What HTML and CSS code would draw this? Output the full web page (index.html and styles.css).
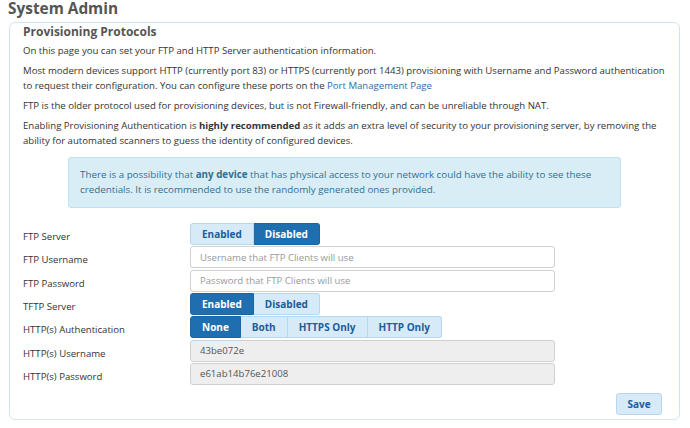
FILE: index.html
```html
<!DOCTYPE html>
<html>
<head>
<meta charset="utf-8">
<link rel="stylesheet" href="styles.css">
</head>
<body>
<div class="page">
  <h1 class="page-title">System Admin</h1>
  <div class="panel">
    <h2 class="panel-title">Provisioning Protocols</h2>
    <p>On this page you can set your FTP and HTTP Server authentication information.</p>
    <p>Most modern devices support HTTP (currently port 83) or HTTPS (currently port 1443) provisioning with Username and Password authentication to request their configuration. You can configure these ports on the <a class="link" href="#">Port Management Page</a></p>
    <p>FTP is the older protocol used for provisioning devices, but is not Firewall-friendly, and can be unreliable through NAT.</p>
    <p>Enabling Provisioning Authentication is <b>highly recommended</b> as it adds an extra level of security to your provisioning server, by removing the ability for automated scanners to guess the identity of configured devices.</p>
    <div class="alert">There is a possibility that <b>any device</b> that has physical access to your network could have the ability to see these credentials. It is recommended to use the randomly generated ones provided.</div>
    <div class="form">
      <div class="label">FTP Server</div>
      <div class="control"><div class="btn-group"><span class="btn">Enabled</span><span class="btn active">Disabled</span></div></div>
      <div class="label">FTP Username</div>
      <div class="control"><input class="input" type="text" placeholder="Username that FTP Clients will use"></div>
      <div class="label">FTP Password</div>
      <div class="control"><input class="input" type="text" placeholder="Password that FTP Clients will use"></div>
      <div class="label">TFTP Server</div>
      <div class="control"><div class="btn-group"><span class="btn active">Enabled</span><span class="btn">Disabled</span></div></div>
      <div class="label">HTTP(s) Authentication</div>
      <div class="control"><div class="btn-group"><span class="btn active">None</span><span class="btn">Both</span><span class="btn">HTTPS Only</span><span class="btn">HTTP Only</span></div></div>
      <div class="label">HTTP(s) Username</div>
      <div class="control"><input class="input" type="text" value="43be072e" disabled></div>
      <div class="label">HTTP(s) Password</div>
      <div class="control"><input class="input" type="text" value="e61ab14b76e21008" disabled></div>
    </div>
    <div class="actions"><span class="btn save">Save</span></div>
  </div>
</div>
</body>
</html>
```
FILE: styles.css
```css
html, body {
  margin: 0;
  padding: 0;
  background: #fff;
}
body {
  font-family: "Open Sans", "Liberation Sans", sans-serif;
  font-size: 9.6px;
  color: #333;
}
.page {
  padding: 0 10px 0 9px;
}
.page-title {
  margin: 0 0 4px -1px;
  font-size: 15.4px;
  line-height: 18px;
  font-weight: 700;
  color: #555;
}
.panel {
  border: 1px solid #cfe4f4;
  border-radius: 6px;
  padding: 1px 13px 4px;
  height: 398px;
  box-sizing: border-box;
}
.panel-title {
  margin: 0 0 3px;
  font-size: 12px;
  line-height: 16px;
  font-weight: 700;
  color: #555;
}
p {
  margin: 0 0 5px;
  line-height: 15px;
}
.link {
  color: #2a6db0;
  text-decoration: none;
}
.alert {
  margin: 9px 45px 0;
  padding: 9px 11px 10px;
  font-size: 9.8px;
  line-height: 15px;
  background: #d9edf7;
  border: 1px solid #bfe1f2;
  border-radius: 3px;
  color: #31708f;
}
.form {
  margin-top: 15px;
  display: grid;
  grid-template-columns: 167px 365px;
  row-gap: 1.33px;
}
.label {
  padding-top: 6px;
  line-height: 16px;
  height: 22px;
  box-sizing: border-box;
}
.control {
  height: 22px;
}
.btn-group {
  display: inline-flex;
  height: 22px;
}
.btn {
  display: inline-flex;
  align-items: center;
  padding: 0 11px;
  height: 22px;
  box-sizing: border-box;
  font-weight: 700;
  font-size: 10px;
  color: #1c5c9c;
  background: #d6eaf8;
  border: 1px solid #b7d7ef;
  border-left-width: 0;
}
.btn-group .btn:first-child {
  border-left-width: 1px;
  border-radius: 3px 0 0 3px;
}
.btn-group .btn:last-child {
  border-radius: 0 3px 3px 0;
}
.btn.active {
  background: #1f6fb0;
  border-color: #1b65a2;
  color: #fff;
}
.input {
  display: block;
  width: 365px;
  height: 22px;
  box-sizing: border-box;
  margin: 0;
  padding: 0 9px;
  border: 1px solid #d0d0d0;
  border-radius: 3px;
  background: #fff;
  font-family: "Open Sans", "Liberation Sans", sans-serif;
  font-size: 9.6px;
  color: #555;
}
.input::placeholder {
  color: #999;
}
.input:disabled {
  background: #eee;
  color: #555;
}
.actions {
  display: flex;
  justify-content: flex-end;
  margin-top: 8px;
  padding-right: 4px;
}
.btn.save {
  width: 46px;
  justify-content: center;
  padding: 0;
  border-left-width: 1px;
  border-radius: 3px;
}
```
